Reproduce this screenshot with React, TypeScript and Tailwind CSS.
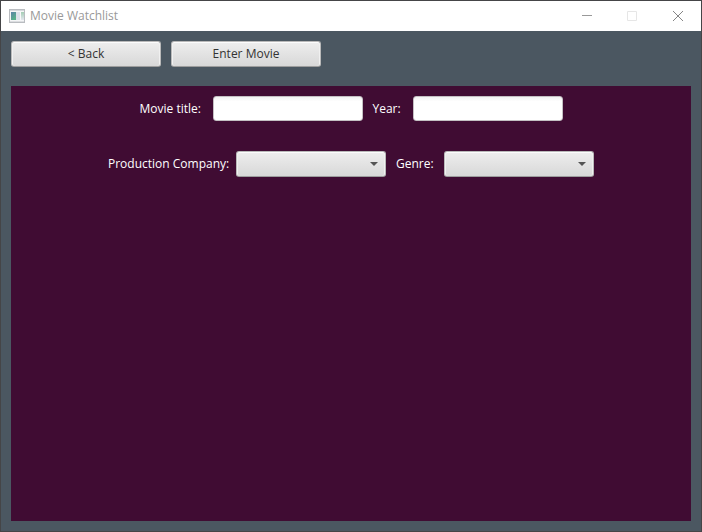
import type { ReactNode } from "react";

const surface =
  "h-[26px] w-[150px] rounded-[3px] border border-[#b9b9b9] border-b-[#9d9d9d] bg-linear-to-b from-[#eeeeee] to-[#d8d8d8] text-xs text-[#333333] shadow-[inset_0_1px_0_#fcfcfc,inset_1px_0_0_#f0f0f0,inset_-1px_0_0_#f0f0f0]";

function WindowIcon() {
  return (
    <svg width="16" height="14" viewBox="0 0 16 14" aria-hidden="true" shapeRendering="crispEdges">
      <defs>
        <linearGradient id="pane" x1="0" y1="0" x2="0.6" y2="1">
          <stop offset="0" stopColor="#5b82a8" />
          <stop offset="1" stopColor="#58b389" />
        </linearGradient>
        <linearGradient id="side" x1="0" y1="0" x2="0" y2="1">
          <stop offset="0" stopColor="#a3cdb4" />
          <stop offset="1" stopColor="#e4e7ef" />
        </linearGradient>
      </defs>
      <rect x="0" y="0" width="16" height="14" fill="#b9bcc0" />
      <rect x="1" y="1" width="14" height="1" fill="#d5d8dc" />
      <rect x="1" y="2" width="14" height="10" fill="#f5f6f7" />
      <rect x="1" y="12" width="14" height="1" fill="#dcdee1" />
      <rect x="2" y="3" width="5" height="8" fill="url(#pane)" />
      <rect x="7" y="3" width="4" height="8" fill="#dce1ea" />
      <rect x="11" y="3" width="1" height="8" fill="#f9f9fa" />
      <rect x="12" y="3" width="3" height="8" fill="url(#side)" />
    </svg>
  );
}

function TitleBar() {
  return (
    <header className="flex h-[30px] items-center bg-white pl-2">
      <WindowIcon />
      <h1 className="grow pl-[5px] text-xs font-normal text-[#999999]">Movie Watchlist</h1>
      <button type="button" aria-label="Minimize" className="flex h-full w-[45px] items-center justify-center">
        <svg width="10" height="10" viewBox="0 0 10 10">
          <path d="M0 4.5H10" stroke="#999999" />
        </svg>
      </button>
      <button type="button" aria-label="Maximize" disabled className="flex h-full w-[45px] items-center justify-center">
        <svg width="10" height="10" viewBox="0 0 10 10">
          <path d="M.5 .5H9.5V9.5H.5Z" fill="none" stroke="#e6e6e6" />
        </svg>
      </button>
      <button type="button" aria-label="Close" className="flex h-full w-[47px] items-center justify-center">
        <svg width="10" height="10" viewBox="0 0 10 10">
          <path d="M0 0L10 10M10 0L0 10" stroke="#858585" />
        </svg>
      </button>
    </header>
  );
}

function Label({ htmlFor, className, children }: { htmlFor: string; className: string; children: ReactNode }) {
  return (
    <label htmlFor={htmlFor} className={`shrink-0 whitespace-nowrap text-xs text-white ${className}`}>
      {children}
    </label>
  );
}

function TextField({ id }: { id: string }) {
  return (
    <input
      id={id}
      type="text"
      className="h-[25px] w-[150px] rounded-[3px] border border-[#c4c0c3] bg-linear-to-b from-[#f3f3f3] to-white to-20% px-2 text-xs text-[#333333] outline-none"
    />
  );
}

function ComboBox({ id }: { id: string }) {
  return (
    <div className="relative h-[26px]">
      <select id={id} className={`${surface} block appearance-none pr-6 pl-2 outline-none`} />
      <svg
        width="8"
        height="4"
        viewBox="0 0 8 4"
        aria-hidden="true"
        className="pointer-events-none absolute top-[11px] right-2"
      >
        <path d="M0 0H8L4 4Z" fill="#545454" />
      </svg>
    </div>
  );
}

export default function App() {
  return (
    <div className="flex min-h-screen flex-col border border-[#454547] bg-[#4b5761] font-['Open_Sans','Noto_Sans',sans-serif]">
      <TitleBar />
      <main className="flex grow flex-col p-2.5">
        <nav className="flex gap-2.5 pb-[19px]">
          <button type="button" className={surface}>
            &lt; Back
          </button>
          <button type="button" className={surface}>
            Enter Movie
          </button>
        </nav>
        <form className="flex grow flex-col gap-[30px] bg-[#400c33] p-2.5">
          <div className="flex items-center justify-center gap-2.5">
            <Label htmlFor="title" className="w-[63px]">Movie title:</Label>
            <TextField id="title" />
            <Label htmlFor="year" className="w-[30px]">Year:</Label>
            <TextField id="year" />
          </div>
          <div className="flex items-center justify-center gap-2.5">
            <Label htmlFor="company" className="w-[118px]">Production Company:</Label>
            <ComboBox id="company" />
            <Label htmlFor="genre" className="w-[38px]">Genre:</Label>
            <ComboBox id="genre" />
          </div>
        </form>
      </main>
    </div>
  );
}
